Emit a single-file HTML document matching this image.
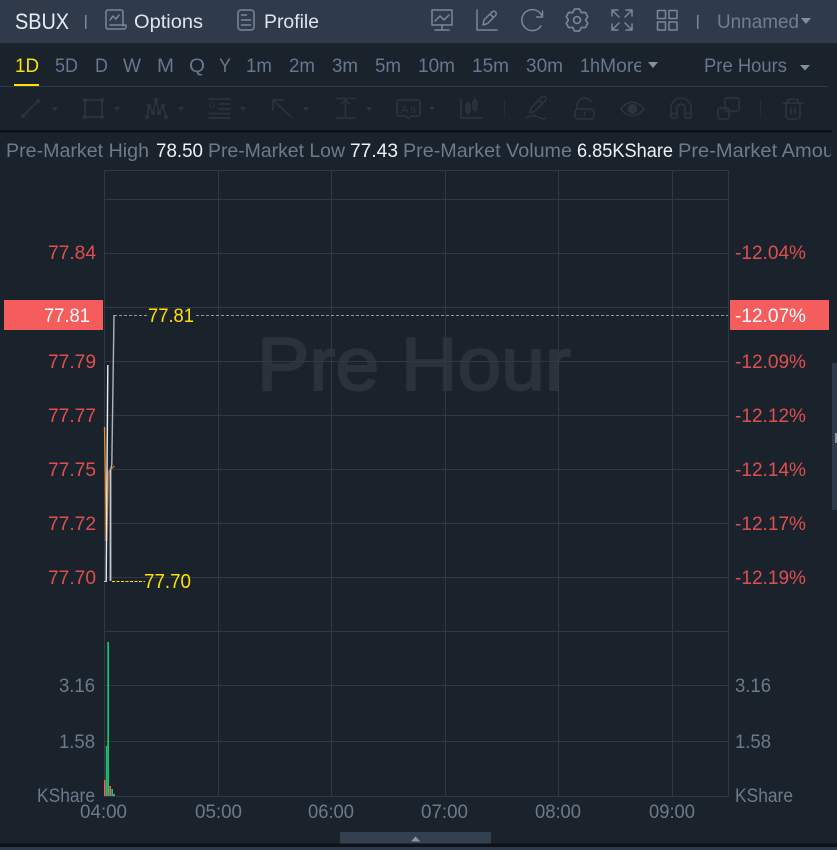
<!DOCTYPE html>
<html><head><meta charset="utf-8"><title>SBUX</title>
<style>
html,body{margin:0;padding:0;background:#1a222c;width:837px;height:850px;overflow:hidden}
svg{display:block;position:absolute;left:0;top:0}
text{font-family:"Liberation Sans","Noto Sans CJK SC",sans-serif;font-size:19px}
.tf{fill:#66778f}
.inf{fill:#6d7a8c}
.wh{fill:#eef1f5}
.r{fill:#df4f50}
.g{fill:#6d7a8c}
.ic{fill:none;stroke:#7c8798;stroke-width:1.5;stroke-linecap:round;stroke-linejoin:round}
.tb{fill:none;stroke:#2c343f;stroke-width:1.5;stroke-linecap:round;stroke-linejoin:round}
.tbf{fill:#2c343f}
</style></head>
<body>
<svg width="837" height="850" viewBox="0 0 837 850" xmlns="http://www.w3.org/2000/svg">
<defs><clipPath id="mc"><rect x="598" y="50" width="43" height="30"/></clipPath>
<clipPath id="ic"><rect x="0" y="135" width="831" height="30"/></clipPath></defs>
<rect width="837" height="850" fill="#1a222c"/>
<rect width="837" height="43" fill="#2f3a4b"/>

<!-- header -->
<text x="15" y="29" style="font-size:22px" fill="#e8ecf2" textLength="54" lengthAdjust="spacingAndGlyphs">SBUX</text>
<rect x="85" y="15" width="1.5" height="14" fill="#7c8798"/>
<g class="ic">
<path d="M123 26V12a2 2 0 0 0-2-2H108a2 2 0 0 0-2 2V27a2 2 0 0 0 2 2H124a2 2 0 0 0 2-2V25H120"/>
<path d="M110 20l3-4 3 3 3-4M110 25h9"/>
<rect x="238" y="10" width="16" height="20" rx="3"/>
<path d="M241.500 15h5M241.500 20h9M241.500 25h9"/>
</g>
<text x="134" y="28" fill="#dfe5ec" textLength="69" lengthAdjust="spacingAndGlyphs">Options</text>
<text x="264" y="28" fill="#dfe5ec" textLength="55" lengthAdjust="spacingAndGlyphs">Profile</text>

<g class="ic">
<rect x="432" y="10" width="20" height="15"/>
<path d="M442 25v5M435 30h14M435 21l5-5 4 4 5-5"/>
<path d="M477 10V30H497"/>
<path d="M483 25l1-5 8-8a1.800 1.800 0 0 1 3.500 3.500l-8 8zM490 14l3.500 3.500"/>
<path d="M541.500 15A10.500 10.500 0 1 0 541 26"/>
<path d="M542.500 11v6h-6"/>
<g transform="translate(577 20) scale(1.08)">
<path d="M-4-6.930L-2.200-10.200H2.200L4-6.930"/>
<path d="M-4-6.930L-2.200-10.200H2.200L4-6.930" transform="rotate(60)"/>
<path d="M-4-6.930L-2.200-10.200H2.200L4-6.930" transform="rotate(120)"/>
<path d="M-4-6.930L-2.200-10.200H2.200L4-6.930" transform="rotate(180)"/>
<path d="M-4-6.930L-2.200-10.200H2.200L4-6.930" transform="rotate(240)"/>
<path d="M-4-6.930L-2.200-10.200H2.200L4-6.930" transform="rotate(300)"/>
<circle r="3.200"/>
</g>
<path d="M612 16V10H618M612 10l7 7M632 16V10H626M632 10l-7 7M612 24V30H618M612 30l7-7M632 24V30H626M632 30l-7-7"/>
<rect x="657.500" y="10.500" width="8" height="8"/>
<rect x="669" y="10.500" width="8" height="8"/>
<rect x="657.500" y="22" width="8" height="8"/>
<rect x="669" y="22" width="8" height="8"/>
</g>
<rect x="697" y="15" width="1.500" height="14" fill="#7c8798"/>
<text x="717" y="28" fill="#6f7f95" textLength="82" lengthAdjust="spacingAndGlyphs">Unnamed</text>
<path d="M801 18h10l-5 6z" fill="#8290a3"/>

<!-- timeframes -->
<text x="15" y="72" fill="#ffe100" textLength="24" lengthAdjust="spacingAndGlyphs">1D</text>
<rect x="14" y="84" width="25" height="2" fill="#ffe100"/>
<g class="tf">
<text x="55" y="72" textLength="23" lengthAdjust="spacingAndGlyphs">5D</text>
<text x="95" y="72" textLength="13" lengthAdjust="spacingAndGlyphs">D</text>
<text x="123" y="72" textLength="18" lengthAdjust="spacingAndGlyphs">W</text>
<text x="157" y="72" textLength="17" lengthAdjust="spacingAndGlyphs">M</text>
<text x="189" y="72" textLength="16" lengthAdjust="spacingAndGlyphs">Q</text>
<text x="219" y="72" textLength="12" lengthAdjust="spacingAndGlyphs">Y</text>
<text x="246" y="72" textLength="26" lengthAdjust="spacingAndGlyphs">1m</text>
<text x="289" y="72" textLength="26" lengthAdjust="spacingAndGlyphs">2m</text>
<text x="332" y="72" textLength="26" lengthAdjust="spacingAndGlyphs">3m</text>
<text x="375" y="72" textLength="26" lengthAdjust="spacingAndGlyphs">5m</text>
<text x="418" y="72" textLength="37" lengthAdjust="spacingAndGlyphs">10m</text>
<text x="472" y="72" textLength="37" lengthAdjust="spacingAndGlyphs">15m</text>
<text x="526" y="72" textLength="37" lengthAdjust="spacingAndGlyphs">30m</text>
<text x="580" y="72" textLength="20" lengthAdjust="spacingAndGlyphs">1h</text>
<text x="600" y="72" clip-path="url(#mc)" textLength="44" lengthAdjust="spacingAndGlyphs">More</text>
<text x="704" y="72" textLength="83" lengthAdjust="spacingAndGlyphs">Pre Hours</text>
</g>
<path d="M648 62h10l-5 6z" fill="#8290a3"/>
<path d="M800 65h10l-5 5.500z" fill="#8290a3"/>
<rect x="0" y="86" width="828" height="1" fill="#2f3a47"/>

<!-- drawing toolbar -->
<g class="tb">
<path d="M23 116L38 101"/>
<path d="M85 100H102V117H85Z"/>
<path d="M147 117L149 106L153 113L156 100L159 113L163 106L166 117"/>
<path d="M219 104H230M219 109H230M209 99H230M209 113.500H230M209 118H230"/>
<path d="M291 117L273 100M273 110V100H283"/>
<path d="M336 98.500H355M336 118H355M345.500 118V100M341 104l4.500-4 4.500 4"/>
<path d="M397 102a2 2 0 0 1 2-2H418a2 2 0 0 1 2 2V114a2 2 0 0 1-2 2H411l-2.500 2.500L406 116H399a2 2 0 0 1-2-2Z"/>
<path d="M461 99V118H482M468 102v13M475 98v14"/>
<rect x="466" y="104" width="4" height="8"/>
<rect x="473" y="101" width="4" height="8"/>
<path d="M530 113l1-5 11-11a2 2 0 0 1 3.500 3.500l-11 11zM526 118c5-3 9-3 13-.500 3 1.800 5 1.800 7 .500M539 100l4 4"/>
<rect x="575" y="109" width="19" height="10" rx="3"/>
<path d="M577 109v-4a7.500 7.500 0 0 1 14-3M584.500 112v3"/>
<path d="M621 109c6-9 16-9 23 0c-7 9-17 9-23 0z"/>
<path d="M671 118V108a10 10 0 0 1 20 0V118H685V108a4 4 0 0 0-8 0V118ZM671 113.500H677M685 113.500H691"/>
<rect x="725" y="98" width="14" height="13" rx="2"/>
<rect x="718" y="108" width="11" height="11" rx="2"/>
<path d="M783 103H803M788 103V99.500H798V103M786 103V116a3 3 0 0 0 3 3H797a3 3 0 0 0 3-3V103M791 108v6M795 108v6"/>
</g>
<g class="tbf">
<circle cx="23" cy="116" r="2"/><circle cx="38" cy="101" r="2"/>
<circle cx="85" cy="100" r="2"/><circle cx="102" cy="100" r="2"/><circle cx="85" cy="117" r="2"/><circle cx="102" cy="117" r="2"/>
<circle cx="147" cy="117" r="2"/><circle cx="149" cy="106" r="2"/><circle cx="153" cy="113" r="2"/><circle cx="156" cy="100" r="2"/><circle cx="159" cy="113" r="2"/><circle cx="163" cy="106" r="2"/><circle cx="166" cy="117" r="2"/>
<circle cx="632.500" cy="109" r="5"/>
<path d="M52 107h6l-3 4zM114 107h6l-3 4zM178 107h6l-3 4zM240 107h6l-3 4zM303 107h6l-3 4zM366 107h6l-3 4zM429 107h6l-3 4z"/>
<rect x="504" y="100" width="1" height="18" opacity=".6"/>
<rect x="760" y="100" width="1" height="18" opacity=".6"/>
<rect x="583.800" y="112" width="1.400" height="3"/>
</g>
<text x="209" y="108" fill="#2c343f" style="font-size:8px">G</text>
<text x="401" y="113" fill="#2c343f" style="font-size:11px;letter-spacing:1.500px">Aa</text>

<rect x="0" y="130" width="832" height="2.500" fill="#0e1217"/>

<!-- info row -->
<g clip-path="url(#ic)">
<text class="inf" x="6" y="157" textLength="143" lengthAdjust="spacingAndGlyphs">Pre-Market High</text>
<text class="wh" x="156" y="157" textLength="47" lengthAdjust="spacingAndGlyphs">78.50</text>
<text class="inf" x="208" y="157" textLength="137" lengthAdjust="spacingAndGlyphs">Pre-Market Low</text>
<text class="wh" x="350" y="157" textLength="48" lengthAdjust="spacingAndGlyphs">77.43</text>
<text class="inf" x="403" y="157" textLength="169" lengthAdjust="spacingAndGlyphs">Pre-Market Volume</text>
<text class="wh" x="577" y="157" textLength="96" lengthAdjust="spacingAndGlyphs">6.85KShare</text>
<text class="inf" x="678" y="157" textLength="156" lengthAdjust="spacingAndGlyphs">Pre-Market Amou</text>
</g>

<!-- watermark -->
<text x="257" y="390" fill="#2a323c" stroke="#2a323c" stroke-width="2" style="font-size:75px" textLength="314" lengthAdjust="spacingAndGlyphs">Pre Hour</text>

<!-- grid -->
<path fill="none" stroke="#2e3945" stroke-width="1" d="M104.500 170V796M218.500 170V796M331.500 170V796M445.500 170V796M558.500 170V796M672.500 170V796M728.500 170V796M104 170.500H729M104 199.500H729M104 253.500H729M104 307.500H729M104 361.500H729M104 415.500H729M104 469.500H729M104 523.500H729M104 577.500H729M104 631.500H729M104 685.500H729M104 741.500H729M104 796.500H729"/>

<!-- left axis -->
<g class="r">
<text x="48" y="259" textLength="48" lengthAdjust="spacingAndGlyphs">77.84</text>
<text x="48" y="368" textLength="48" lengthAdjust="spacingAndGlyphs">77.79</text>
<text x="48" y="422" textLength="48" lengthAdjust="spacingAndGlyphs">77.77</text>
<text x="48" y="476" textLength="48" lengthAdjust="spacingAndGlyphs">77.75</text>
<text x="48" y="530" textLength="48" lengthAdjust="spacingAndGlyphs">77.72</text>
<text x="48" y="584" textLength="48" lengthAdjust="spacingAndGlyphs">77.70</text>
<text x="735" y="259" textLength="71" lengthAdjust="spacingAndGlyphs">-12.04%</text>
<text x="735" y="368" textLength="71" lengthAdjust="spacingAndGlyphs">-12.09%</text>
<text x="735" y="422" textLength="71" lengthAdjust="spacingAndGlyphs">-12.12%</text>
<text x="735" y="476" textLength="71" lengthAdjust="spacingAndGlyphs">-12.14%</text>
<text x="735" y="530" textLength="71" lengthAdjust="spacingAndGlyphs">-12.17%</text>
<text x="735" y="584" textLength="71" lengthAdjust="spacingAndGlyphs">-12.19%</text>
</g>
<rect x="4" y="300" width="99" height="30" fill="#f55c5c"/>
<rect x="730" y="300" width="99" height="30" fill="#f55c5c"/>
<text x="44" y="322" fill="#fff" textLength="46" lengthAdjust="spacingAndGlyphs">77.81</text>
<text x="735" y="322" fill="#fff" textLength="71" lengthAdjust="spacingAndGlyphs">-12.07%</text>

<!-- price lines -->
<path d="M114 315.500H148M196 315.500H728" stroke="#a98c93" stroke-width="1" stroke-dasharray="3 2" fill="none"/>
<path d="M112 581.500H145" stroke="#ffe100" stroke-width="1" stroke-dasharray="3 1.500" fill="none"/>
<path d="M104 581.500H107" stroke="#c8ccd2" stroke-width="1" fill="none"/>
<text x="148" y="322" fill="#ffe100" textLength="46" lengthAdjust="spacingAndGlyphs">77.81</text>
<text x="144" y="588" fill="#ffe100" style="font-size:20px" textLength="47" lengthAdjust="spacingAndGlyphs">77.70</text>

<!-- price curve -->
<path d="M104.500 427V470L106 541H104.800Z" fill="#f08a24" opacity=".45"/>
<path d="M104.500 427L106.500 541" stroke="#f08a24" stroke-width="1.300" fill="none"/>
<path d="M106.500 541L108.500 472L110 470" stroke="#f08a24" stroke-width="1.800" opacity=".55" fill="none"/>
<path d="M110 470L114.500 466" stroke="#f08a24" stroke-width="1" fill="none"/>
<path d="M107.800 365L106.200 581" stroke="#e9ecef" stroke-width="1.400" fill="none"/>
<path d="M114 315L111.800 465" stroke="#aeb4bc" stroke-width="1.400" fill="none"/>
<path d="M110.500 470V581" stroke="#c4c9cf" stroke-width="1.800" fill="none"/>
<path d="M111.800 465L110.500 470" stroke="#aeb4bc" stroke-width="1.400" fill="none"/>

<!-- volume -->
<rect x="104" y="780" width="1.500" height="16" fill="#f55c5c"/>
<rect x="105.800" y="746" width="1.400" height="50" fill="#1fc06e"/>
<rect x="107.300" y="642" width="1.700" height="154" fill="#1fc06e"/>
<rect x="109.300" y="786" width="1.700" height="10" fill="#f55c5c"/>
<rect x="111.300" y="789" width="1.700" height="7" fill="#1fc06e"/>
<rect x="113" y="794" width="2" height="2" fill="#1fc06e"/>

<!-- volume axis + time -->
<g class="g">
<text x="59" y="692" textLength="36" lengthAdjust="spacingAndGlyphs">3.16</text>
<text x="59" y="748" textLength="36" lengthAdjust="spacingAndGlyphs">1.58</text>
<text x="37" y="802" textLength="58" lengthAdjust="spacingAndGlyphs">KShare</text>
<text x="735" y="692" textLength="36" lengthAdjust="spacingAndGlyphs">3.16</text>
<text x="735" y="748" textLength="36" lengthAdjust="spacingAndGlyphs">1.58</text>
<text x="735" y="802" textLength="58" lengthAdjust="spacingAndGlyphs">KShare</text>
<text x="80" y="818" textLength="47" lengthAdjust="spacingAndGlyphs">04:00</text>
<text x="195" y="818" textLength="47" lengthAdjust="spacingAndGlyphs">05:00</text>
<text x="308" y="818" textLength="46" lengthAdjust="spacingAndGlyphs">06:00</text>
<text x="421" y="818" textLength="47" lengthAdjust="spacingAndGlyphs">07:00</text>
<text x="535" y="818" textLength="46" lengthAdjust="spacingAndGlyphs">08:00</text>
<text x="649" y="818" textLength="46" lengthAdjust="spacingAndGlyphs">09:00</text>
</g>

<!-- bottom toggle -->
<rect x="340" y="832" width="151" height="12" fill="#33404f"/>
<path d="M411 841.500L415.500 836.500L420.500 841.500Z" fill="#8a94a3"/>
<rect x="0" y="843.500" width="837" height="3.500" fill="#0e1217"/>
<rect x="0" y="847" width="837" height="3" fill="#2f3a4b"/>

<!-- right side handle -->
<rect x="832" y="363" width="5" height="147" fill="#2f3a4b"/>
<rect x="835" y="433" width="2" height="10" fill="#8a94a3"/>
</svg>
</body></html>
